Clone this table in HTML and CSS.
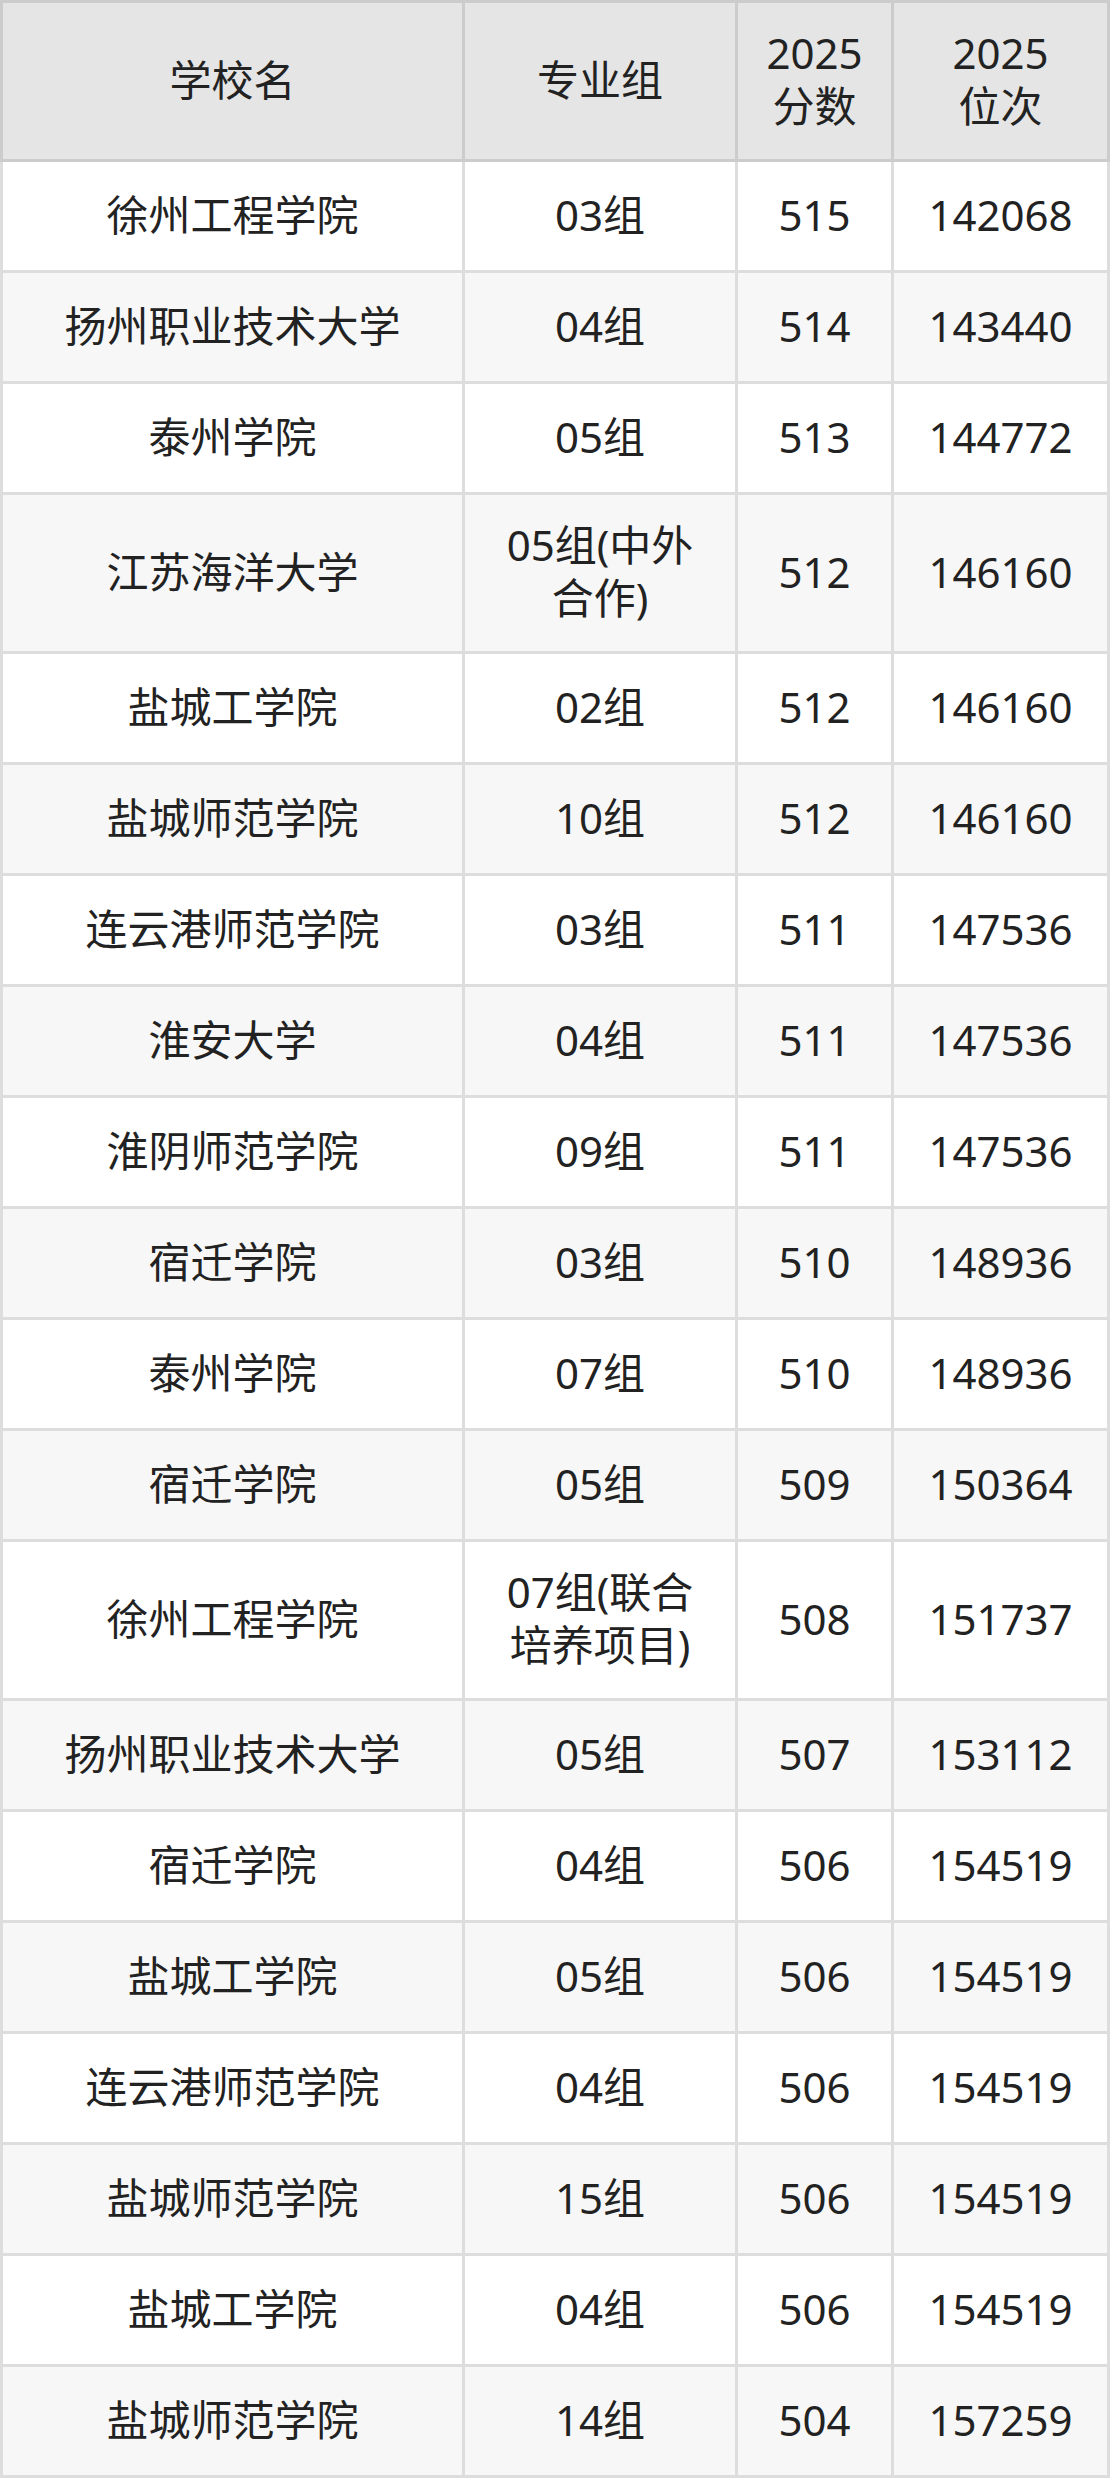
FILE: index.html
```html
<!DOCTYPE html>
<html lang="zh-CN">
<head>
<meta charset="utf-8">
<title>2025 分数位次</title>
<link rel="stylesheet" href="styles.css">
</head>
<body>
<table class="score-table">
  <colgroup>
    <col class="col-school">
    <col class="col-group">
    <col class="col-score">
    <col class="col-rank">
  </colgroup>
  <thead>
    <tr>
      <th>学校名</th>
      <th>专业组</th>
      <th>2025<br>分数</th>
      <th>2025<br>位次</th>
    </tr>
  </thead>
  <tbody>
    <tr><td>徐州工程学院</td><td>03组</td><td>515</td><td>142068</td></tr>
    <tr><td>扬州职业技术大学</td><td>04组</td><td>514</td><td>143440</td></tr>
    <tr><td>泰州学院</td><td>05组</td><td>513</td><td>144772</td></tr>
    <tr><td>江苏海洋大学</td><td>05组(中外合作)</td><td>512</td><td>146160</td></tr>
    <tr><td>盐城工学院</td><td>02组</td><td>512</td><td>146160</td></tr>
    <tr><td>盐城师范学院</td><td>10组</td><td>512</td><td>146160</td></tr>
    <tr><td>连云港师范学院</td><td>03组</td><td>511</td><td>147536</td></tr>
    <tr><td>淮安大学</td><td>04组</td><td>511</td><td>147536</td></tr>
    <tr><td>淮阴师范学院</td><td>09组</td><td>511</td><td>147536</td></tr>
    <tr><td>宿迁学院</td><td>03组</td><td>510</td><td>148936</td></tr>
    <tr><td>泰州学院</td><td>07组</td><td>510</td><td>148936</td></tr>
    <tr><td>宿迁学院</td><td>05组</td><td>509</td><td>150364</td></tr>
    <tr><td>徐州工程学院</td><td>07组(联合培养项目)</td><td>508</td><td>151737</td></tr>
    <tr><td>扬州职业技术大学</td><td>05组</td><td>507</td><td>153112</td></tr>
    <tr><td>宿迁学院</td><td>04组</td><td>506</td><td>154519</td></tr>
    <tr><td>盐城工学院</td><td>05组</td><td>506</td><td>154519</td></tr>
    <tr><td>连云港师范学院</td><td>04组</td><td>506</td><td>154519</td></tr>
    <tr><td>盐城师范学院</td><td>15组</td><td>506</td><td>154519</td></tr>
    <tr><td>盐城工学院</td><td>04组</td><td>506</td><td>154519</td></tr>
    <tr><td>盐城师范学院</td><td>14组</td><td>504</td><td>157259</td></tr>
  </tbody>
</table>
</body>
</html>
```

FILE: styles.css
```css
html, body {
  margin: 0;
  padding: 0;
  background: #ffffff;
}

body {
  font-family: "Noto Sans", "Noto Sans CJK SC", sans-serif;
  font-size: 42px;
  color: #222222;
}

.score-table {
  width: 1110px;
  border-collapse: collapse;
  table-layout: fixed;
}

.col-school { width: 462px; }
.col-group  { width: 273px; }
.col-score  { width: 156px; }
.col-rank   { width: 216px; }

.score-table th,
.score-table td {
  height: 58px;
  padding: 23px 26px 27px;
  line-height: 53px;
  text-align: center;
  vertical-align: middle;
  font-weight: normal;
}

.score-table th {
  background: #e5e5e5;
  border: 3px solid #cccccc;
}

.score-table td {
  border: 3px solid #dddddd;
}

.score-table tbody tr:nth-child(even) td {
  background: #f7f7f7;
}
```
